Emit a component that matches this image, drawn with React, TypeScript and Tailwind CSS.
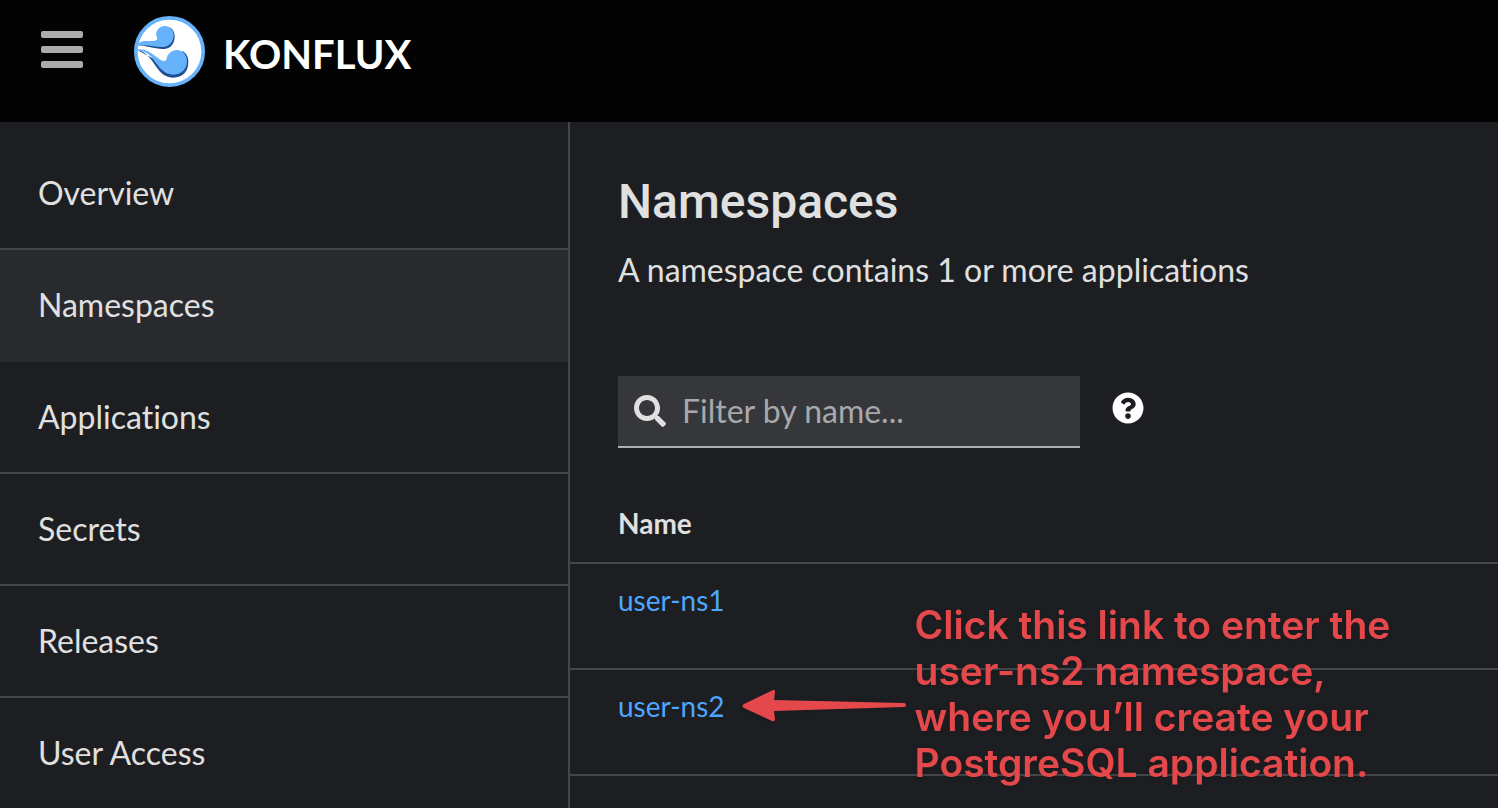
import React, { useState } from "react";
import { FaQuestionCircle, FaSearch } from "react-icons/fa";

const navItems = [
  "Overview",
  "Namespaces",
  "Applications",
  "Secrets",
  "Releases",
  "User Access",
];

const namespaces = ["user-ns1", "user-ns2"];

function KonfluxMark() {
  return (
    <svg viewBox="27 18 213 213" className="size-[71px]" aria-hidden="true">
      <circle cx="133.5" cy="124.5" r="101" fill="#fff" stroke="#66b2fb" strokeWidth="11" />
      <path
        d="M38 106 C62 106 88 118 118 117 C139 115 150 98 149 77 C148 63 141 55 132 52 L118 96 Z"
        fill="#1d4f91"
      />
      <path
        d="M40 101 C48 90 68 94 85 93 C95 92 100 88 95 81 C90 63 102 48 119 48 C136 48 146 62 146 76 C146 96 132 110 116 111 C90 112 66 102 39 107 Z"
        fill="#66b2fb"
      />
      <path
        d="M38 121 C68 124 84 160 104 184 C119 201 137 205 155 202 C180 197 190 178 190 155 C190 139 182 128 173 124 L120 165 Z"
        fill="#1d4f91"
      />
      <path
        d="M38 118 C72 117 87 138 106 149 C114 154 121 154 124 149 C127 131 140 120 156 120 C174 120 186 135 186 154 C186 179 167 194 146 194 C122 194 107 178 96 163 C80 140 68 122 38 122 Z"
        fill="#66b2fb"
      />
    </svg>
  );
}

function Header() {
  return (
    <header className="flex h-[122px] shrink-0 items-start bg-[#030303] px-[41px] pt-4">
      <button type="button" aria-label="Toggle navigation" className="mt-[15px] flex w-[42px] flex-col gap-2">
        <span className="h-[7px] w-full rounded-xs bg-[#aaabac]" />
        <span className="h-[7px] w-full rounded-xs bg-[#aaabac]" />
        <span className="h-[7px] w-full rounded-xs bg-[#aaabac]" />
      </button>
      <a href="#home" className="ml-[51px] flex items-center gap-[18px]">
        <KonfluxMark />
        <span className="pt-1 text-[40px] leading-12 font-bold text-white">KONFLUX</span>
      </a>
    </header>
  );
}

function Sidebar() {
  return (
    <nav aria-label="Main" className="w-[570px] shrink-0 border-r-2 border-[#444548] pt-4">
      <ul>
        {navItems.map((item) => (
          <li key={item}>
            <a
              href={"#" + item.toLowerCase().replace(" ", "-")}
              aria-current={item === "Namespaces" ? "page" : undefined}
              className="flex h-28 items-center border-b-2 border-[#444548] px-[38px] text-[32px] leading-12 aria-[current=page]:border-[#292a2d] aria-[current=page]:bg-[#292a2d]"
            >
              {item}
            </a>
          </li>
        ))}
      </ul>
    </nav>
  );
}

function Callout() {
  return (
    <div className="pointer-events-none absolute -top-[84px] left-full ml-4 flex items-center gap-2 text-[#e5484b] drop-shadow-sm">
      <svg viewBox="0 0 166 34" className="mt-6 h-[34px] w-[166px]" fill="currentColor" aria-hidden="true">
        <path d="M3 15 L32 1 Q34 0 34 3 L33 11 L163 14 Q165 14 165 16 Q165 18 163 18 L33 22 L34 30 Q34 33 31 32 L3 19 Q0 17 3 15 Z" />
      </svg>
      <p className="font-['Inter',sans-serif] text-[39px] leading-[46px] font-semibold whitespace-nowrap">
        Click this link to enter the
        <br />
        user-ns2 namespace,
        <br />
        where you’ll create your
        <br />
        PostgreSQL application.
      </p>
    </div>
  );
}

export default function App() {
  const [filter, setFilter] = useState("");
  const rows = namespaces.filter((name) => name.includes(filter));

  return (
    <div className="flex h-screen flex-col overflow-hidden bg-[#1d1e21] font-['Lato',sans-serif] text-[#e0e0e0] [font-variant-ligatures:none]">
      <Header />
      <div className="flex min-h-0 flex-1">
        <Sidebar />
        <main className="min-w-0 flex-1">
          <div className="px-12 pt-12">
            <h1 className="font-['Roboto',sans-serif] text-5xl leading-16 font-medium">Namespaces</h1>
            <p className="mt-3 text-[32px] leading-12">A namespace contains 1 or more applications</p>
            <div className="mt-[82px] flex items-center gap-8">
              <label className="flex h-[72px] w-[462px] items-center gap-4 border-b-2 border-[#b0b1b3] bg-[#36373a] px-4">
                <FaSearch className="size-8 shrink-0" aria-hidden="true" />
                <input
                  type="text"
                  aria-label="Filter by name"
                  placeholder="Filter by name..."
                  value={filter}
                  onChange={(event) => setFilter(event.target.value)}
                  className="min-w-0 flex-1 bg-transparent text-[32px] leading-12 outline-none placeholder:text-[#a8a9ac]"
                />
              </label>
              <button type="button" aria-label="Help" className="mb-2 text-white">
                <FaQuestionCircle className="size-8" aria-hidden="true" />
              </button>
            </div>
          </div>
          <table className="mt-[35px] w-full border-collapse text-left text-[28px] leading-10">
            <thead>
              <tr className="h-20 border-b-2 border-[#444548]">
                <th scope="col" className="px-12 font-bold">Name</th>
              </tr>
            </thead>
            <tbody>
              {rows.map((name) => (
                <tr key={name} className="h-[106px] border-b-2 border-[#444548]">
                  <td className="px-12 pt-4 align-top">
                    <div className="relative w-fit">
                      <a href={"#" + name} className="text-[#4da6ff]">{name}</a>
                      {name === "user-ns2" && <Callout />}
                    </div>
                  </td>
                </tr>
              ))}
            </tbody>
          </table>
        </main>
      </div>
    </div>
  );
}
